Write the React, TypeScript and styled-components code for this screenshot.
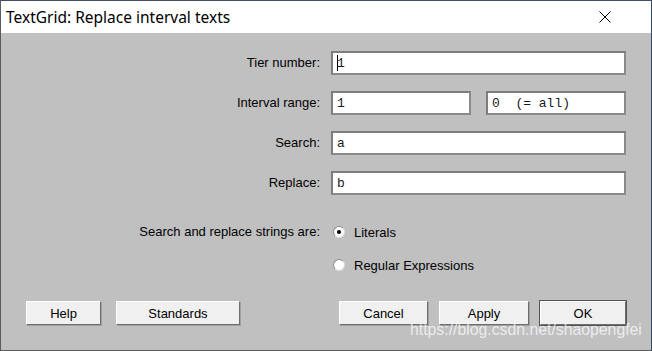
import styled, { createGlobalStyle } from "styled-components";

const GlobalStyle = createGlobalStyle`
  html, body {
    margin: 0;
    padding: 0;
    background: #c0c0c0;
  }
`;

const Window = styled.div`
  position: relative;
  width: 652px;
  height: 351px;
  box-sizing: border-box;
  border: 1px solid #5b5b5b;
  border-right-color: #2f4b68;
  border-top-color: #3c4f63;
  background: #c0c0c0;
  display: flex;
  flex-direction: column;
  font-family: "Liberation Sans", Arial, sans-serif;
  font-size: 13px;
  color: #000;
  overflow: hidden;
`;

const TitleBar = styled.div`
  height: 32px;
  background: #fff;
  display: flex;
  align-items: center;
  justify-content: space-between;
  padding: 0 40px 0 5px;
  flex-shrink: 0;
`;

const Title = styled.span`
  font-family: "Noto Sans", "Segoe UI", sans-serif;
  font-size: 15.5px;
  color: #000;
`;

const CloseIcon = styled.svg`
  width: 12px;
  height: 12px;
`;

const Content = styled.div`
  flex: 1;
  display: flex;
  flex-direction: column;
  padding: 18px 25px 0 0;
`;

const Form = styled.div`
  display: grid;
  grid-template-columns: 319px 1fr;
  column-gap: 11px;
  row-gap: 16px;
  align-items: center;
`;

const Label = styled.span`
  text-align: right;
  line-height: 24px;
`;

const Field = styled.div<{ $split?: boolean }>`
  display: grid;
  grid-template-columns: ${(p) => (p.$split ? "1fr 1fr" : "1fr")};
  column-gap: 15px;
`;

const Input = styled.div`
  height: 24px;
  box-sizing: border-box;
  background: #fff;
  border: 2px solid #7d7d7d;
  border-right-color: #8a8a8a;
  border-bottom-color: #8a8a8a;
  padding-left: 4px;
  display: flex;
  align-items: center;
  font-family: "Liberation Mono", "Courier New", monospace;
  font-size: 13px;
  white-space: pre;
  color: #1a1a1a;
`;

const Caret = styled.span`
  display: inline-block;
  width: 1px;
  height: 16px;
  background: #000;
  margin-right: -1px;
`;

const Options = styled.div`
  display: grid;
  grid-template-columns: 319px 1fr;
  column-gap: 11px;
  row-gap: 9px;
  margin-top: 25px;
`;

const RadioRow = styled.label`
  display: flex;
  align-items: center;
  gap: 9px;
  height: 24px;
  padding-left: 2px;
`;

const RadioDot = styled.span<{ $checked?: boolean }>`
  width: 12px;
  height: 12px;
  box-sizing: border-box;
  border-radius: 50%;
  background: #fff;
  border: 1px solid #8e8e8e;
  border-right-color: #dcdcdc;
  border-bottom-color: #dcdcdc;
  display: flex;
  align-items: center;
  justify-content: center;

  &::after {
    content: "";
    width: 4px;
    height: 4px;
    border-radius: 50%;
    background: ${(p) => (p.$checked ? "#000" : "transparent")};
  }
`;

const ButtonBar = styled.div`
  display: flex;
  align-items: center;
  gap: 11px;
  margin-top: 24px;
  padding-left: 25px;
`;

const Button = styled.button<{ $w: number; $default?: boolean }>`
  flex-shrink: 0;
  width: ${(p) => p.$w}px;
  height: 24px;
  box-sizing: border-box;
  background: #f0f0f0;
  border: 1px solid;
  border-color: #fff #6e6e6e #6e6e6e #fff;
  box-shadow: ${(p) =>
    p.$default ? "0 0 0 1px #555" : "1px 1px 0 #a0a0a0"};
  font-family: "Liberation Sans", Arial, sans-serif;
  font-size: 13px;
  color: #000;
  padding: 0;
`;

const Spacer = styled.div`
  flex: 1;
`;

const Watermark = styled.span`
  position: absolute;
  left: 409px;
  top: 320px;
  font-family: "Liberation Sans", Arial, sans-serif;
  font-size: 15.8px;
  color: rgba(255, 255, 255, 0.72);
  pointer-events: none;
`;

export default function App() {
  return (
    <>
      <GlobalStyle />
      <Window>
        <TitleBar>
          <Title>TextGrid: Replace interval texts</Title>
          <CloseIcon viewBox="0 0 12 12">
            <path d="M0.5 0.5 L11.5 11.5 M11.5 0.5 L0.5 11.5" stroke="#000" strokeWidth="1" />
          </CloseIcon>
        </TitleBar>
        <Content>
          <Form>
            <Label>Tier number:</Label>
            <Field>
              <Input>
                <Caret />1
              </Input>
            </Field>
            <Label>Interval range:</Label>
            <Field $split>
              <Input>1</Input>
              <Input>0  (= all)</Input>
            </Field>
            <Label>Search:</Label>
            <Field>
              <Input>a</Input>
            </Field>
            <Label>Replace:</Label>
            <Field>
              <Input>b</Input>
            </Field>
          </Form>
          <Options>
            <Label>Search and replace strings are:</Label>
            <RadioRow>
              <RadioDot $checked />
              Literals
            </RadioRow>
            <span />
            <RadioRow>
              <RadioDot />
              Regular Expressions
            </RadioRow>
          </Options>
          <ButtonBar>
            <Button $w={75} style={{ marginRight: 4 }}>Help</Button>
            <Button $w={124}>Standards</Button>
            <Spacer />
            <Button $w={89}>Cancel</Button>
            <Button $w={90}>Apply</Button>
            <Button $w={86} $default>OK</Button>
          </ButtonBar>
        </Content>
        <Watermark>https://blog.csdn.net/shaopengfei</Watermark>
      </Window>
    </>
  );
}
